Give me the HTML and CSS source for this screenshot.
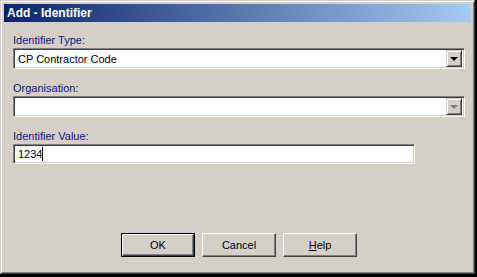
FILE: index.html
```html
<!DOCTYPE html>
<html lang="en">
<head>
    <meta charset="UTF-8">
    <title>Add - Identifier</title>
    <link rel="stylesheet" href="styles.css">
</head>
<body>
    <div class="dialog">
        <div class="titlebar">Add - Identifier</div>
        <div class="content">
            <div class="field">
                <label>Identifier Type:</label>
                <div class="combo">
                    <span class="value">CP Contractor Code</span>
                    <span class="drop"><span class="arrow"></span></span>
                </div>
            </div>
            <div class="field">
                <label>Organisation:</label>
                <div class="combo">
                    <span class="value"></span>
                    <span class="drop disabled"><span class="arrow"></span></span>
                </div>
            </div>
            <div class="field">
                <label>Identifier Value:</label>
                <div class="textbox"><span class="value">1234</span><span class="caret"></span></div>
            </div>
        </div>
        <div class="buttons">
            <div class="btn default"><span class="inner">OK</span></div>
            <div class="btn"><span class="inner">Cancel</span></div>
            <div class="btn"><span class="inner"><u>H</u>elp</span></div>
        </div>
    </div>
</body>
</html>
```

FILE: styles.css
```css
body {
    margin: 0;
    background-color: #000;
    font-family: "Liberation Sans", Arial, sans-serif;
    font-size: 11px;
    width: 477px;
    height: 277px;
    overflow: hidden;
}
.dialog {
    box-sizing: border-box;
    width: 475px;
    height: 274px;
    background-color: #d4d0c8;
    border: 1px solid;
    border-color: #d4d0c8 #404040 #404040 #d4d0c8;
    box-shadow: inset 1px 1px 0 #fff, inset -1px -1px 0 #808080;
    padding: 3px;
    display: flex;
    flex-direction: column;
}
.titlebar {
    height: 18px;
    line-height: 18px;
    padding-left: 3px;
    color: #fff;
    font-weight: bold;
    font-size: 12px;
    background: linear-gradient(to right, #0a246a, #a6caf0);
}
.content {
    padding: 11px 6px 0 9px;
}
.field {
    margin-bottom: 12px;
}
.field label {
    display: block;
    color: #10108a;
    line-height: 14px;
    height: 14px;
    margin-bottom: 1px;
}
.combo, .textbox {
    box-sizing: border-box;
    height: 21px;
    background-color: #fff;
    border: 1px solid;
    border-color: #808080 #fff #fff #808080;
    box-shadow: inset 1px 1px 0 #404040, inset -1px -1px 0 #d4d0c8;
    display: flex;
    align-items: center;
    padding: 2px 2px 2px 4px;
}
.combo .value {
    flex: 1;
    color: #000;
}
.drop {
    box-sizing: border-box;
    width: 16px;
    height: 17px;
    background-color: #d4d0c8;
    border: 1px solid;
    border-color: #d4d0c8 #404040 #404040 #d4d0c8;
    box-shadow: inset 1px 1px 0 #fff, inset -1px -1px 0 #808080;
    display: flex;
    align-items: center;
    justify-content: center;
}
.arrow {
    width: 0;
    height: 0;
    border-left: 4px solid transparent;
    border-right: 4px solid transparent;
    border-top: 4px solid #000;
    margin-top: 1px;
}
.drop.disabled .arrow {
    border-top-color: #808080;
}
.textbox {
    width: 402px;
    height: 20px;
}
.caret {
    display: inline-block;
    width: 1px;
    height: 14px;
    background-color: #000;
}
.buttons {
    margin-top: auto;
    margin-bottom: 13px;
    display: flex;
    justify-content: center;
    gap: 7px;
    padding-left: 3px;
}
.btn {
    box-sizing: border-box;
    width: 74px;
    height: 24px;
    border: 1px solid;
    border-color: #fff #404040 #404040 #fff;
    box-shadow: inset -1px -1px 0 #808080;
    display: flex;
    align-items: center;
    justify-content: center;
    color: #000;
}
.btn.default {
    border: 1px solid #000;
    box-shadow: none;
}
.btn.default .inner {
    box-sizing: border-box;
    width: 100%;
    height: 100%;
    display: flex;
    align-items: center;
    justify-content: center;
    border: 1px solid;
    border-color: #fff #404040 #404040 #fff;
    box-shadow: inset -1px -1px 0 #808080;
}
```
